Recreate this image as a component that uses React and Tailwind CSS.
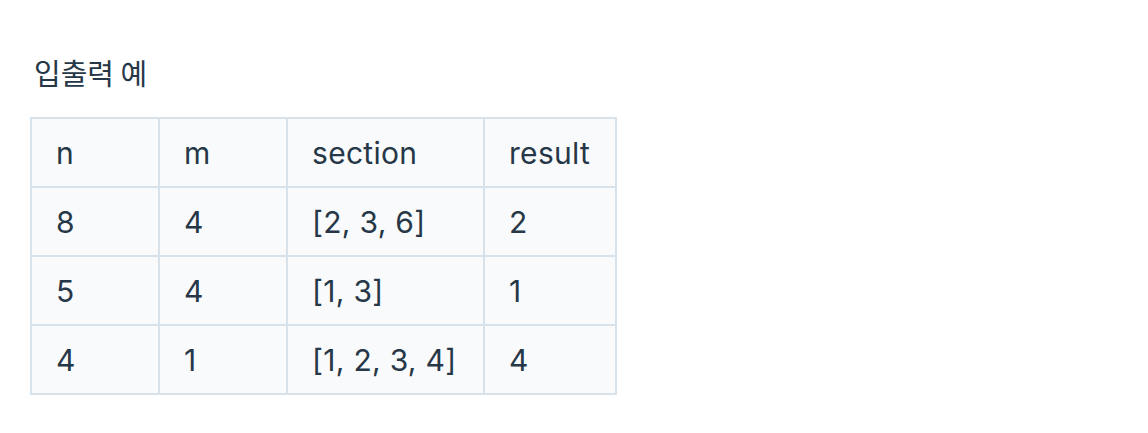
export default function App() {
  const rows = [
    ["8", "4", "[2, 3, 6]", "2"],
    ["5", "4", "[1, 3]", "1"],
    ["4", "1", "[1, 2, 3, 4]", "4"],
  ];
  const head = ["n", "m", "section", "result"];
  const font = { fontFamily: 'Inter, "Noto Sans CJK KR", sans-serif' };
  return (
    <div className="w-[1148px] h-[433px] bg-white text-[#263747] pt-[48px] pl-[34px]" style={font}>
      <h5 className="text-[29px] leading-[48px] font-normal" style={{ fontFamily: '"Noto Sans CJK KR", sans-serif' }}>입출력 예</h5>
      <table className="mt-[21px] -ml-[4px] border-collapse table-fixed w-[585px] text-[30px] tracking-[0.3px]">
        <colgroup>
          <col className="w-[128px]" />
          <col className="w-[128px]" />
          <col className="w-[197px]" />
          <col className="w-[132px]" />
        </colgroup>
        <thead>
          <tr>
            {head.map((h) => (
              <td key={h} className="border-2 border-[#d7e2eb] bg-[#f9fafc] h-[69px] px-[24px] py-0 leading-[36px] align-middle">{h}</td>
            ))}
          </tr>
        </thead>
        <tbody>
          {rows.map((r, i) => (
            <tr key={i}>
              {r.map((c, j) => (
                <td key={j} className="border-2 border-[#d7e2eb] bg-[#f9fafc] h-[69px] px-[24px] py-0 leading-[36px] align-middle whitespace-nowrap">{c}</td>
              ))}
            </tr>
          ))}
        </tbody>
      </table>
    </div>
  );
}
